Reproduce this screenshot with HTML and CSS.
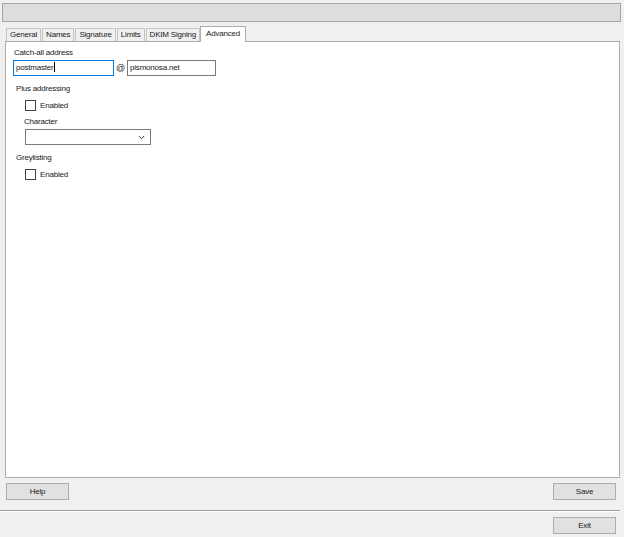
FILE: index.html
```html
<!DOCTYPE html>
<html lang="en">
<head>
  <meta charset="UTF-8">
  <title>Domain settings</title>
  <link rel="stylesheet" href="styles.css">
</head>
<body>

  <!-- title strip -->
  <div class="titlebar"></div>

  <div class="tabs-area">
    <div class="tab-strip">
      <div class="tab">General</div>
      <div class="tab">Names</div>
      <div class="tab">Signature</div>
      <div class="tab">Limits</div>
      <div class="tab">DKIM Signing</div>
      <div class="tab active">Advanced</div>
    </div>

    <div class="tab-panel">
      <div class="label">Catch-all address</div>
      <div class="catch-row">
        <div class="textbox focused wide">postmaster<span class="caret"></span></div>
        <span class="at">@</span>
        <div class="textbox domain">pismonosa.net</div>
      </div>

      <div class="group-title">Plus addressing</div>
      <div class="group">
        <label class="check"><span class="box"></span>Enabled</label>
        <div class="sub-label">Character</div>
        <div class="combo">
          <svg width="7" height="5" viewBox="0 0 7 5"><path d="M0.8 1 L3.5 3.7 L6.2 1" fill="none" stroke="#333" stroke-width="1"/></svg>
        </div>
      </div>

      <div class="group-title">Greylisting</div>
      <div class="group">
        <label class="check"><span class="box"></span>Enabled</label>
      </div>
    </div>
  </div>

  <div class="actions">
    <button class="btn">Help</button>
    <button class="btn">Save</button>
  </div>

  <div class="separator"></div>

  <div class="footer">
    <button class="btn">Exit</button>
  </div>

</body>
</html>
```

FILE: styles.css
```css
body {
  margin: 0;
  padding: 0;
  width: 624px;
  height: 537px;
  background: #f0f0f0;
  font-family: 'Liberation Sans', Arial, sans-serif;
  font-size: 8px;
  letter-spacing: -0.2px;
  color: #1a1a1a;
  display: flex;
  flex-direction: column;
  overflow: hidden;
}

.titlebar {
  height: 17px;
  margin: 3px 3px 0 2px;
  background: #dddddd;
  border: 1px solid #a6a6a6;
}

.tabs-area {
  margin: 4px 4px 0 5px;
  display: flex;
  flex-direction: column;
}

.tab-strip {
  display: flex;
  align-items: flex-end;
  padding-left: 1px;
  height: 15px;
  position: relative;
  z-index: 1;
}

.tab {
  height: 12px;
  line-height: 12px;
  padding: 0 3px;
  margin-right: 1px;
  border: 1px solid #c4c4c4;
  border-bottom: none;
  background: #f0f0f0;
  white-space: nowrap;
}

.tab.active {
  height: 15px;
  line-height: 14px;
  padding: 0 5px;
  margin-left: -1px;
  background: #ffffff;
  border-color: #acacac;
  margin-bottom: -1px;
}

.tab-panel {
  height: 430px;
  background: #ffffff;
  border: 1px solid #acacac;
  padding: 5px 0 0 7px;
}

.label {
  height: 12px;
  line-height: 12px;
  margin-left: 1px;
}

.catch-row {
  display: flex;
  align-items: center;
  margin-top: 1px;
}

.textbox {
  height: 14px;
  line-height: 14px;
  border: 1px solid #7a7a7a;
  background: #fff;
  padding: 0 2px;
  box-sizing: content-box;
}

.textbox.wide {
  width: 95px;
}

.textbox.domain {
  width: 83px;
}

.textbox.focused {
  border-color: #0078d7;
}

.caret {
  display: inline-block;
  width: 1px;
  height: 10px;
  background: #000;
  vertical-align: -2px;
}

.at {
  width: 13px;
  text-align: center;
  font-size: 9px;
}

.group-title {
  margin: 7px 0 0 3px;
  height: 12px;
  line-height: 12px;
}

.group {
  padding-left: 12px;
}

.check {
  display: flex;
  align-items: center;
  margin-top: 4px;
  height: 12px;
}

.box {
  width: 9px;
  height: 9px;
  border: 1px solid #444;
  background: #fff;
  margin-right: 4px;
}

.sub-label {
  margin: 5px 0 0 -1px;
  height: 12px;
  line-height: 12px;
}

.combo {
  height: 14px;
  margin-top: 1px;
  border: 1px solid #7a7a7a;
  background: #fff;
  display: flex;
  align-items: center;
  justify-content: flex-end;
  padding-right: 5px;
  box-sizing: content-box;
  width: 119px;
}

.actions {
  display: flex;
  justify-content: space-between;
  margin: 5px 8px 0 6px;
}

.btn {
  width: 63px;
  height: 17px;
  padding: 0;
  background: #e1e1e1;
  border: 1px solid #adadad;
  font-family: inherit;
  font-size: 8px;
  letter-spacing: inherit;
  color: #1a1a1a;
}

.separator {
  margin: 10px 4px 0 0;
  height: 1px;
  background: #a0a0a0;
  border-bottom: 1px solid #ffffff;
}

.footer {
  display: flex;
  justify-content: flex-end;
  margin: 5px 8px 0 0;
}
```
